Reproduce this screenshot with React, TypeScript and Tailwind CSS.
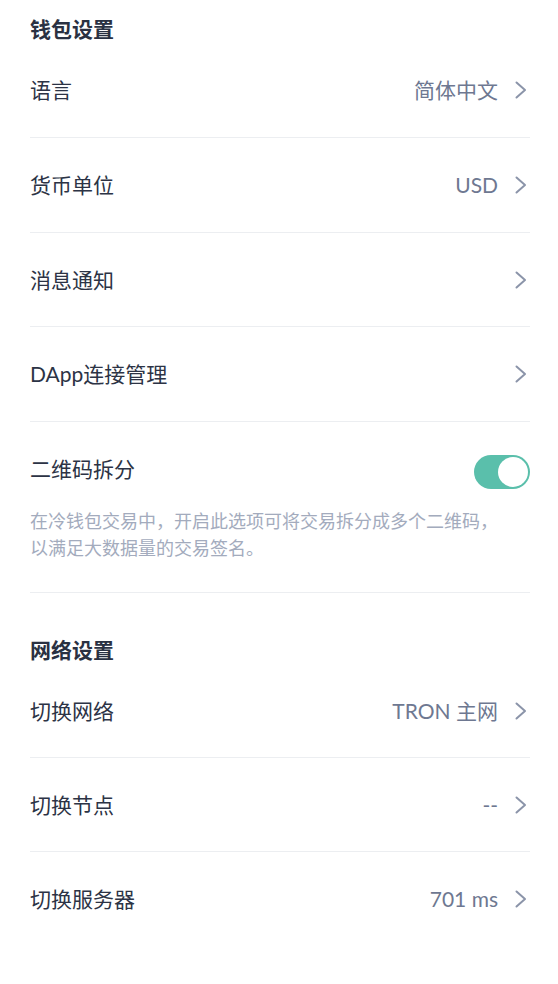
import React, { useState } from 'react';

const font = { fontFamily: 'Lato, "Noto Sans CJK SC", sans-serif' };

const Chevron = () => (
  <svg width="12" height="18" viewBox="0 0 12 18" className="shrink-0">
    <polyline points="1.5,1.5 10,9 1.5,16.5" fill="none" stroke="#8b94a9" strokeWidth="2" strokeLinecap="round" strokeLinejoin="round" />
  </svg>
);

type RowProps = { label: string; value?: string; h?: string; last?: boolean };

const Row = ({ label, value, h = 'h-[95px]', last }: RowProps) => (
  <div className={`flex ${h} items-center justify-between ${last ? '' : 'border-b border-[#eceef1]'}`}>
    <span className="text-[21px] leading-[28px] text-[#2c3345]">{label}</span>
    <div className="flex items-center gap-[17px] pr-[3px]">
      {value && <span className="text-[21px] leading-[28px] text-[#6e7891]">{value}</span>}
      <Chevron />
    </div>
  </div>
);

const Toggle = ({ on, onChange }: { on: boolean; onChange: () => void }) => (
  <button
    onClick={onChange}
    className={`mt-[6px] flex h-[34px] w-[56px] items-center rounded-full p-[2px] ${on ? 'justify-end bg-[#5abfab]' : 'justify-start bg-[#d5d9e0]'}`}
  >
    <span className="block h-[30px] w-[30px] rounded-full bg-white" />
  </button>
);

export default function App() {
  const [split, setSplit] = useState(true);

  return (
    <div className="min-h-screen bg-white pl-[30px] pr-[28px]" style={font}>
      <h2 className="pt-[15px] text-[21px] font-bold leading-[28px] text-[#2a3142]">钱包设置</h2>
      <Row label="语言" value="简体中文" />
      <Row label="货币单位" value="USD" />
      <Row label="消息通知" h="h-[94px]" />
      <Row label="DApp连接管理" />

      <div className="border-b border-[#eceef1] pt-[30px] pb-[30px]">
        <div className="flex h-[34px] items-center justify-between">
          <span className="text-[21px] leading-[28px] text-[#2c3345]">二维码拆分</span>
          <Toggle on={split} onChange={() => setSplit(!split)} />
        </div>
        <p className="mt-[22px] max-w-[480px] text-[18px] leading-[27px] text-[#a3abbd]">
          在冷钱包交易中，开启此选项可将交易拆分成多个二维码，以满足大数据量的交易签名。
        </p>
      </div>

      <h2 className="pt-[43px] text-[21px] font-bold leading-[28px] text-[#2a3142]">网络设置</h2>
      <Row label="切换网络" value="TRON 主网" h="h-[94px]" />
      <Row label="切换节点" value="--" h="h-[94px]" />
      <Row label="切换服务器" value="701 ms" h="h-[94px]" last />
    </div>
  );
}
